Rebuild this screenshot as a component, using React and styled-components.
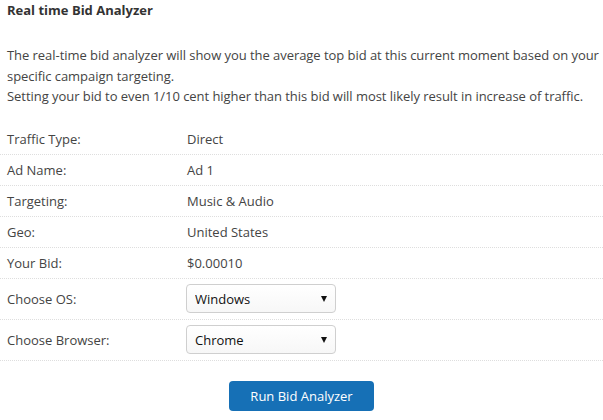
import React from "react";
import styled, { createGlobalStyle } from "styled-components";

const Global = createGlobalStyle`
  html, body { margin: 0; padding: 0; background: #fff; }
  body { font-family: "Open Sans", "Liberation Sans", sans-serif; font-size: 13px; color: #444; }
`;

const Page = styled.div`
  width: 603px;
  display: flex;
  flex-direction: column;
`;

const Title = styled.h3`
  margin: 0;
  padding: 0 7px;
  font-size: 13px;
  line-height: 20px;
  font-weight: 700;
  color: #333;
`;

const Intro = styled.p`
  margin: 25px 0 0;
  padding: 0 0 0 7px;
  line-height: 20.7px;
  letter-spacing: -0.05px;
`;

const Table = styled.div`
  margin-top: 17px;
  display: flex;
  flex-direction: column;
`;

const Row = styled.div`
  display: grid;
  grid-template-columns: 180px 1fr;
  align-items: center;
  height: ${(p) => (p.$tall ? "40px" : "30px")};
  border-bottom: 1px dotted #dedede;
`;

const Cell = styled.div`
  padding-left: 7px;
  line-height: 18px;
`;

const SelectWrap = styled.div`
  position: relative;
  width: 150px;
  height: 29px;
  margin-left: 6px;
  margin-top: -1px;
`;

const Select = styled.select`
  appearance: none;
  -webkit-appearance: none;
  width: 100%;
  height: 100%;
  box-sizing: border-box;
  border: 1px solid #cfcfcf;
  border-radius: 4px;
  background: linear-gradient(#ffffff, #f7f7f7);
  font-family: "Open Sans", "Liberation Sans", sans-serif;
  font-size: 13px;
  color: #111;
  padding: 0 0 0 8px;
  outline: none;
`;

const Arrow = styled.span`
  position: absolute;
  right: 9px;
  top: 12px;
  width: 0;
  height: 0;
  border-left: 3.5px solid transparent;
  border-right: 3.5px solid transparent;
  border-top: 6px solid #111;
  pointer-events: none;
`;

const ButtonRow = styled.div`
  display: flex;
  justify-content: center;
  margin-top: 20px;
`;

const Button = styled.button`
  width: 145px;
  height: 30px;
  border: none;
  border-radius: 4px;
  background: #1670b6;
  color: #fff;
  font-family: "Open Sans", "Liberation Sans", sans-serif;
  font-size: 13px;
  cursor: pointer;
`;

const info = [
  ["Traffic Type:", "Direct"],
  ["Ad Name:", "Ad 1"],
  ["Targeting:", "Music & Audio"],
  ["Geo:", "United States"],
  ["Your Bid:", "$0.00010"],
];

const selects = [
  ["Choose OS:", "Windows", ["Windows", "Mac OS", "Linux", "Android", "iOS"]],
  ["Choose Browser:", "Chrome", ["Chrome", "Firefox", "Safari", "Edge", "Opera"]],
];

export default function App() {
  return (
    <Page>
      <Global />
      <Title>Real time Bid Analyzer</Title>
      <Intro>
        The real-time bid analyzer will show you the average top bid at this current moment based on your specific campaign targeting.
        <br />
        Setting your bid to even 1/10 cent higher than this bid will most likely result in increase of traffic.
      </Intro>
      <Table>
        {info.map(([k, v]) => (
          <Row key={k}>
            <Cell>{k}</Cell>
            <Cell>{v}</Cell>
          </Row>
        ))}
        {selects.map(([k, v, opts]) => (
          <Row key={k} $tall>
            <Cell>{k}</Cell>
            <SelectWrap>
              <Select defaultValue={v}>
                {opts.map((o) => (
                  <option key={o}>{o}</option>
                ))}
              </Select>
              <Arrow />
            </SelectWrap>
          </Row>
        ))}
      </Table>
      <ButtonRow>
        <Button>Run Bid Analyzer</Button>
      </ButtonRow>
    </Page>
  );
}
